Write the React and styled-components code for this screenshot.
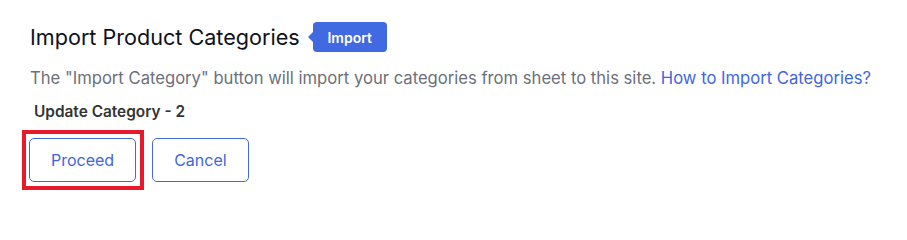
import React from "react";
import styled, { createGlobalStyle } from "styled-components";

const GlobalStyle = createGlobalStyle`
  html, body {
    margin: 0;
    padding: 0;
    background: #fff;
  }
  body {
    font-family: Inter, "Noto Sans", "Liberation Sans", sans-serif;
    -webkit-font-smoothing: antialiased;
  }
`;

const Panel = styled.div`
  padding: 22px 0 0 30px;
  width: 907px;
  box-sizing: border-box;
`;

const TitleRow = styled.div`
  display: flex;
  align-items: center;
  gap: 13px;
  height: 30px;
`;

const Title = styled.h2`
  margin: 0;
  font-size: 21.6px;
  font-weight: 400;
  color: #0e1120;
`;

const Badge = styled.span`
  position: relative;
  display: inline-flex;
  align-items: center;
  justify-content: center;
  width: 74px;
  height: 30px;
  background: #4169e1;
  color: #fff;
  font-size: 14px;
  font-weight: 600;
  border-radius: 4px;

  &:before {
    content: "";
    position: absolute;
    left: -5px;
    top: 50%;
    margin-top: -5px;
    border-top: 5px solid transparent;
    border-bottom: 5px solid transparent;
    border-right: 5px solid #4169e1;
  }
`;

const Description = styled.p`
  margin: 15px 0 0;
  font-size: 16.64px;
  color: #6b6f7a;
  line-height: 22px;
`;

const HelpLink = styled.a`
  color: #3d66e0;
  text-decoration: none;
`;

const Counter = styled.div`
  margin: 14px 0 0 4px;
  font-size: 15.4px;
  font-weight: 600;
  color: #333;
  line-height: 18px;
`;

const Actions = styled.div`
  display: flex;
  align-items: center;
  gap: 8px;
  margin: 9px 0 0 -8px;
`;

const Highlight = styled.div`
  border: 4px solid #e8192c;
  padding: 4px 4px 4px 3px;
  display: flex;
`;

const Button = styled.button`
  height: 44px;
  padding: 0 ${props => props.$pad}px;
  background: #fff;
  border: 1px solid #4169e1;
  border-radius: 5px;
  color: #3d66e0;
  font-family: inherit;
  font-size: 16px;
  font-weight: 400;
  cursor: pointer;
`;

export default function App() {
  return (
    <>
      <GlobalStyle />
      <Panel>
        <TitleRow>
          <Title>Import Product Categories</Title>
          <Badge>Import</Badge>
        </TitleRow>
        <Description>
          The "Import Category" button will import your categories from sheet to this site.{" "}
          <HelpLink href="#">How to Import Categories?</HelpLink>
        </Description>
        <Counter>Update Category - 2</Counter>
        <Actions>
          <Highlight>
            <Button $pad={21}>Proceed</Button>
          </Highlight>
          <Button $pad={21}>Cancel</Button>
        </Actions>
      </Panel>
    </>
  );
}
